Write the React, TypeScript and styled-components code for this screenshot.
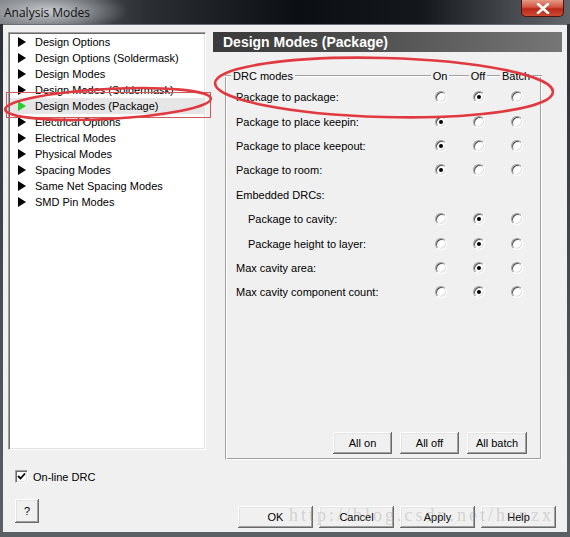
import React from "react";
import styled, { createGlobalStyle } from "styled-components";

const GlobalStyle = createGlobalStyle`
  html, body {
    margin: 0;
    padding: 0;
  }
  body {
    width: 570px;
    height: 537px;
    overflow: hidden;
    font-family: "Liberation Sans", Arial, sans-serif;
  }
`;

const treeItems = [
  "Design Options",
  "Design Options (Soldermask)",
  "Design Modes",
  "Design Modes (Soldermask)",
  "Design Modes (Package)",
  "Electrical Options",
  "Electrical Modes",
  "Physical Modes",
  "Spacing Modes",
  "Same Net Spacing Modes",
  "SMD Pin Modes",
];
const selectedItem = 4;

type Mode = "on" | "off" | "batch";
type DrcRow = { label: string; indent?: boolean; value?: Mode };

const drcRows: DrcRow[] = [
  { label: "Package to package:", value: "off" },
  { label: "Package to place keepin:", value: "on" },
  { label: "Package to place keepout:", value: "on" },
  { label: "Package to room:", value: "on" },
  { label: "Embedded DRCs:" },
  { label: "Package to cavity:", indent: true, value: "off" },
  { label: "Package height to layer:", indent: true, value: "off" },
  { label: "Max cavity area:", value: "off" },
  { label: "Max cavity component count:", value: "off" },
];
const modes: Mode[] = ["on", "off", "batch"];

function App() {
  return (
    <>
      <GlobalStyle />
      <Window>
        <TitleBar>
          <Title>Analysis Modes</Title>
          <CloseButton>
            <svg width="14" height="11" viewBox="0 0 14 11">
              <path d="M2 1 L12 10 M12 1 L2 10" stroke="#fff" strokeWidth="2.6" strokeLinecap="round" />
            </svg>
          </CloseButton>
        </TitleBar>

        <Client>
          <LeftCol>
            <Tree>
              {treeItems.map((item, i) => (
                <TreeRow key={item} $selected={i === selectedItem}>
                  <Arrow $selected={i === selectedItem} />
                  {item}
                </TreeRow>
              ))}
            </Tree>
            <CheckRow>
              <CheckBox>
                <svg width="9" height="9" viewBox="0 0 9 9">
                  <path d="M1 4 L3.5 6.5 L8 1.5" stroke="#000" strokeWidth="1.8" fill="none" />
                </svg>
              </CheckBox>
              On-line DRC
            </CheckRow>
            <HelpButton $w={24} $h={24}>?</HelpButton>
          </LeftCol>

          <RightCol>
            <PanelHeader>Design Modes (Package)</PanelHeader>
            <GroupBox>
              <GroupHead>
                <HeadFirst>
                  <Rule $w={6} />
                  <HeadText>DRC modes</HeadText>
                  <Rule />
                </HeadFirst>
                {["On", "Off", "Batch"].map((t) => (
                  <HeadCell key={t}>
                    <Rule />
                    <HeadText>{t}</HeadText>
                    <Rule />
                  </HeadCell>
                ))}
                <Rule />
              </GroupHead>

              <Rows>
                {drcRows.map((row) => (
                  <DrcLine key={row.label}>
                    <DrcLabel $indent={row.indent}>{row.label}</DrcLabel>
                    {row.value &&
                      modes.map((m) => (
                        <RadioCell key={m}>
                          <Radio $on={row.value === m} />
                        </RadioCell>
                      ))}
                  </DrcLine>
                ))}
              </Rows>

              <GroupButtons>
                <Button $w={59} $h={22}>All on</Button>
                <Button $w={59} $h={22}>All off</Button>
                <Button $w={60} $h={22}>All batch</Button>
              </GroupButtons>
            </GroupBox>

            <DialogButtons>
              <Button $w={75} $h={22}>OK</Button>
              <Button $w={75} $h={22}>Cancel</Button>
              <Button $w={75} $h={22}>Apply</Button>
              <Button $w={75} $h={22}>Help</Button>
            </DialogButtons>
          </RightCol>
        </Client>

        <Watermark>http://blog.csdn.net/hanzx</Watermark>

        <Marks width="570" height="537" viewBox="0 0 570 537">
          <rect x="6.5" y="92.5" width="204" height="25" fill="none" stroke="#cf5a5a" strokeWidth="1" />
          <ellipse cx="108" cy="104" rx="103" ry="15" transform="rotate(-3 108 104)" fill="none" stroke="#e0393f" strokeWidth="2.6" />
          <ellipse cx="384" cy="87.5" rx="169" ry="29.5" transform="rotate(1.5 384 87.5)" fill="none" stroke="#e0393f" strokeWidth="2.6" />
        </Marks>
      </Window>
    </>
  );
}

const Window = styled.div`
  position: relative;
  width: 570px;
  height: 537px;
  display: flex;
  flex-direction: column;
  background: linear-gradient(180deg, #2a2e33 0%, #4a4f54 60%, #5b6065 100%);
  overflow: hidden;
`;

const TitleBar = styled.div`
  height: 24px;
  flex: none;
  display: flex;
  align-items: center;
  background:
    radial-gradient(ellipse 80px 22px at 48px 11px, rgba(205, 208, 212, 0.95), rgba(205, 208, 212, 0) 100%),
    linear-gradient(90deg, #6f7377 0%, #2b2f33 26%, #0b0e12 52%, #14171b 74%, #4d5155 92%, #62666a 100%);
`;

const Title = styled.span`
  padding-left: 4px;
  font-family: "Open Sans", "Noto Sans", sans-serif;
  font-size: 12px;
  color: #111;
`;

const CloseButton = styled.div`
  margin-left: auto;
  margin-right: 6px;
  align-self: flex-start;
  width: 43px;
  height: 17px;
  box-sizing: border-box;
  border: 1px solid #4a1410;
  border-top: none;
  border-radius: 0 0 5px 5px;
  background: linear-gradient(180deg, #e79a88 0%, #d2533e 45%, #b8281a 55%, #cf4a32 100%);
  display: flex;
  align-items: center;
  justify-content: center;
`;

const Client = styled.div`
  flex: none;
  height: 508px;
  margin: 0 3px;
  box-sizing: border-box;
  border-top: 1px solid #6b6f73;
  background: #f0f0f0;
  display: flex;
  padding: 7px 0 0 5px;
`;

const LeftCol = styled.div`
  width: 198px;
  display: flex;
  flex-direction: column;
  align-items: flex-start;
`;

const Tree = styled.div`
  width: 198px;
  height: 418px;
  box-sizing: border-box;
  background: #fff;
  border: 1px solid;
  border-color: #a0a0a0 #fff #fff #a0a0a0;
  box-shadow: inset 1px 1px 0 #696969, inset -1px -1px 0 #e3e3e3;
  padding: 1px 1px 0 1px;
`;

const TreeRow = styled.div<{ $selected?: boolean }>`
  height: 16px;
  display: flex;
  align-items: center;
  font-size: 11px;
  color: #000;
  white-space: nowrap;
  background: ${(p) => (p.$selected ? "#e6e6e6" : "transparent")};
`;

const Arrow = styled.span<{ $selected?: boolean }>`
  width: 0;
  height: 0;
  margin: 0 9px 0 8px;
  border-top: 5.5px solid transparent;
  border-bottom: 5.5px solid transparent;
  border-left: 8px solid ${(p) => (p.$selected ? "#25d12c" : "#000")};
`;

const CheckRow = styled.label`
  margin: 20px 0 0 7px;
  display: flex;
  align-items: center;
  gap: 5px;
  font-size: 11px;
  color: #000;
`;

const CheckBox = styled.span`
  width: 13px;
  height: 13px;
  box-sizing: border-box;
  background: #fff;
  border: 1px solid;
  border-color: #a0a0a0 #fff #fff #a0a0a0;
  box-shadow: inset 1px 1px 0 #696969, inset -1px -1px 0 #e3e3e3;
  display: flex;
  align-items: center;
  justify-content: center;
`;

const RightCol = styled.div`
  width: 349px;
  margin-left: 7px;
  display: flex;
  flex-direction: column;
`;

const PanelHeader = styled.div`
  height: 20px;
  display: flex;
  align-items: center;
  padding-left: 10px;
  background: linear-gradient(90deg, #3a3a3a 0%, #4c4c4c 40%, #767676 100%);
  color: #fff;
  font-size: 14px;
  font-weight: bold;
`;

const GroupBox = styled.div`
  margin: 24px 20px 0 12px;
  height: 384px;
  box-sizing: border-box;
  display: flex;
  flex-direction: column;
  border-left: 1px solid #a0a0a0;
  border-right: 1px solid #fff;
  border-bottom: 1px solid #fff;
  box-shadow: inset 1px 0 0 #fff, inset -1px 0 0 #a0a0a0, inset 0 -1px 0 #a0a0a0;
`;

const GroupHead = styled.div`
  margin: -7px -1px 0 -1px;
  height: 14px;
  display: grid;
  grid-template-columns: 1fr 38px 38px 38px 7px;
  align-items: center;
  font-size: 11px;
`;

const HeadFirst = styled.div`
  display: flex;
  align-items: center;
`;

const HeadCell = styled.div`
  display: flex;
  align-items: center;
  justify-content: center;
`;

const HeadText = styled.span`
  padding: 0 2px;
  white-space: nowrap;
  color: #000;
`;

const Rule = styled.span<{ $w?: number }>`
  flex: ${(p) => (p.$w ? `0 0 ${p.$w}px` : "1 1 0")};
  height: 0;
  border-top: 1px solid #a0a0a0;
  border-bottom: 1px solid #fff;
`;

const Rows = styled.div`
  padding: 2px 5px 0 0;
`;

const DrcLine = styled.div`
  height: 24.4px;
  display: grid;
  grid-template-columns: 1fr 38px 38px 38px;
  align-items: center;
`;

const DrcLabel = styled.span<{ $indent?: boolean }>`
  padding-left: ${(p) => (p.$indent ? 22 : 10)}px;
  font-size: 11px;
  color: #000;
  white-space: nowrap;
`;

const RadioCell = styled.span`
  display: flex;
  justify-content: center;
`;

const Radio = styled.span<{ $on?: boolean }>`
  width: 12px;
  height: 12px;
  box-sizing: border-box;
  border-radius: 50%;
  background: #fff;
  border: 1px solid;
  border-color: #a0a0a0 #fff #fff #a0a0a0;
  box-shadow: inset 1px 1px 0 #555, inset -1px -1px 0 #dcdcdc;
  display: flex;
  align-items: center;
  justify-content: center;

  &::after {
    content: "";
    width: 4px;
    height: 4px;
    border-radius: 50%;
    background: ${(p) => (p.$on ? "#000" : "transparent")};
  }
`;

const GroupButtons = styled.div`
  margin: auto 14px 5px 0;
  display: flex;
  justify-content: flex-end;
  gap: 8px;
`;

const DialogButtons = styled.div`
  margin: 46px 6px 0 0;
  display: flex;
  justify-content: flex-end;
  gap: 6px;
`;

const Button = styled.button<{ $w: number; $h: number }>`
  width: ${(p) => p.$w}px;
  height: ${(p) => p.$h}px;
  padding: 0;
  border: none;
  background: #f0f0f0;
  box-shadow: inset -1px -1px 0 #696969, inset 1px 1px 0 #fff, inset -2px -2px 0 #a0a0a0, inset 2px 2px 0 #e3e3e3;
  font-family: "Liberation Sans", Arial, sans-serif;
  font-size: 11px;
  color: #000;
`;

const HelpButton = styled(Button)`
  margin: 16px 0 0 7px;
`;

const Watermark = styled.span`
  position: absolute;
  left: 289px;
  top: 505px;
  font-family: "Liberation Serif", serif;
  font-size: 18px;
  letter-spacing: 3px;
  color: rgba(160, 160, 160, 0.4);
  pointer-events: none;
  white-space: nowrap;
`;

const Marks = styled.svg`
  position: absolute;
  left: 0;
  top: 0;
  pointer-events: none;
`;

export default App;
